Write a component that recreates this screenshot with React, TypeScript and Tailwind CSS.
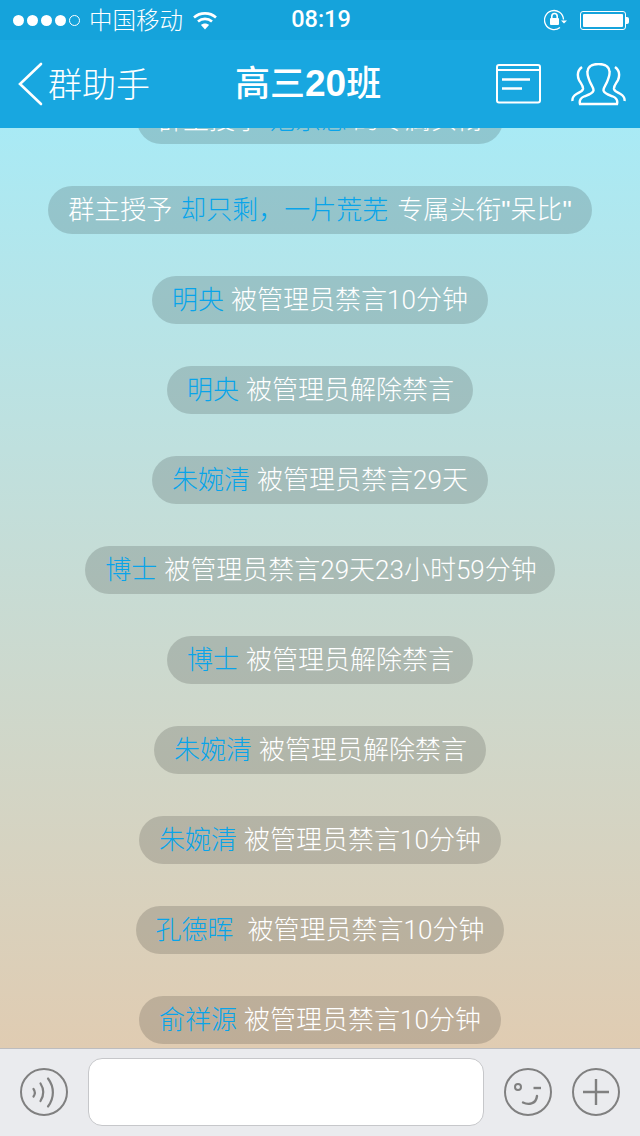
import React from 'react';

const rows = [
  { pre: '群主授予', name: '范京恋', text: '的专属头衔', gap: 'mr-[6px]', box: 'pr-[20px]' },
  { pre: '群主授予', name: '却只剩，一片荒芜', text: '专属头衔"呆比"', gap: 'mr-[9px]', box: 'pr-[20px]', quote: true },
  { name: '明央', text: '被管理员禁言10分钟', gap: 'mr-[7px]', box: 'pr-[20px]' },
  { name: '明央', text: '被管理员解除禁言', gap: 'mr-[7px]', box: 'pr-[19px]' },
  { name: '朱婉清', text: '被管理员禁言29天', gap: 'mr-[7px]', box: 'pr-[20px]' },
  { name: '博士', text: '被管理员禁言29天23小时59分钟', gap: 'mr-[7px]', box: 'pr-[18px]' },
  { name: '博士', text: '被管理员解除禁言', gap: 'mr-[7px]', box: 'pr-[19px]' },
  { name: '朱婉清', text: '被管理员解除禁言', gap: 'mr-[7px]', box: 'pr-[19px]' },
  { name: '朱婉清', text: '被管理员禁言10分钟', gap: 'mr-[7px]', box: 'pr-[20px]' },
  { name: '孔德晖', text: '被管理员禁言10分钟', gap: 'mr-[14px]', box: 'pr-[20px]' },
  { name: '俞祥源', text: '被管理员禁言10分钟', gap: 'mr-[7px]', box: 'pr-[20px]' },
];

const App = () => {
  return (
    <div className="flex h-[1136px] w-[640px] flex-col overflow-hidden bg-[#eaebee] font-['Liberation_Sans','Noto_Sans_CJK_SC',sans-serif]">
      <header className="relative z-10 h-[128px] shrink-0 bg-[#18a7e0] text-white">
        <div className="flex h-[40px] items-center justify-between bg-[#15a3db] pl-[13px] pr-[11px]">
          <div className="flex w-[220px] items-center">
            <div className="flex items-center gap-[3px]">
              <span className="h-[11px] w-[11px] rounded-full bg-white"></span>
              <span className="h-[11px] w-[11px] rounded-full bg-white"></span>
              <span className="h-[11px] w-[11px] rounded-full bg-white"></span>
              <span className="h-[11px] w-[11px] rounded-full bg-white"></span>
              <span className="h-[11px] w-[11px] rounded-full border border-white"></span>
            </div>
            <span className="ml-[9px] mt-[3px] text-[23.5px] font-light leading-none">中国移动</span>
            <svg className="ml-[10px]" width="24" height="19" viewBox="0 0 24 19" fill="none" stroke="#fff" strokeWidth="2.6">
              <path d="M1 6.500C7 1 17 1 23 6.500" />
              <path d="M5 10.500C9 7 15 7 19 10.500" />
              <path d="M12 18.500l-4-4.500c2-2 6-2 8 0z" fill="#fff" stroke="none" />
            </svg>
          </div>
          <span className="font-['Roboto','Liberation_Sans',sans-serif] text-[23.5px] font-medium leading-none">08:19</span>
          <div className="flex w-[220px] items-center justify-end">
            <svg width="24" height="22" viewBox="0 0 24 22" fill="none" stroke="#fff" strokeWidth="1.3">
              <path d="M19.500 10.500A9.500 9.500 0 1 0 16 18.400" />
              <rect x="6" y="9" width="9" height="7" rx="1" fill="#fff" stroke="none" />
              <path d="M7.800 9V7.200a2.700 2.700 0 0 1 5.400 0V9" strokeWidth="1.600" />
              <path d="M17 11.500h6l-3 3z" fill="#fff" stroke="none" />
            </svg>
            <div className="ml-[12px] flex items-center">
              <div className="h-[19px] w-[46px] rounded-[3px] border border-white p-[2px]">
                <div className="h-full w-full rounded-[1px] bg-white"></div>
              </div>
              <span className="h-[7px] w-[3px] rounded-r-[2px] bg-white"></span>
            </div>
          </div>
        </div>
        <div className="flex h-[88px] items-center pl-[18px] pr-[14px]">
          <svg width="25" height="44" viewBox="0 0 25 44" fill="none" stroke="#fff" strokeWidth="2.600" strokeLinecap="round">
            <path d="M23 2L2 22l21 20" />
          </svg>
          <span className="ml-[5px] mt-[2px] w-[102px] text-[34px] font-light leading-none">群助手</span>
          <div className="ml-[85px] text-[35px] font-medium leading-[44px]">
            高三<span className="text-[37px] font-bold">20</span>班
          </div>
          <div className="ml-auto flex items-center">
            <svg width="46" height="40" viewBox="0 0 46 40" fill="none" stroke="#fff" strokeWidth="2">
              <rect x="1" y="1" width="43" height="37.500" rx="2" />
              <path d="M1 6h43" />
              <path d="M6 15.500h28M6 24.500h20" strokeWidth="2.500" />
            </svg>
            <svg className="ml-[29px]" width="55" height="43" viewBox="0 0 55 43" fill="none" stroke="#fff" strokeWidth="2.400">
              <path d="M9 41c-1-4 .5-6 4-7.500 4-1.500 9-3 9.500-6 .4-2.500-2-5-3.500-8.500-1.500-3.500-3-7-2.500-10.500C17 3 21 1 27.500 1S38 3 38.500 8.500c.5 3.500-1 7-2.500 10.500s-3.900 6-3.500 8.500c.5 3 5.500 4.500 9.500 6 3.500 1.500 5 3.500 4 7.500z" />
              <path d="M11 4C7 7 6 12 8 17c1.500 3 4.500 6 4 9-.5 2.500-4 3.500-6.500 5C3 32.500 1 34.500 1.500 38" />
              <path d="M44 4C48 7 49 12 47 17c-1.500 3-4.500 6-4 9 .5 2.500 4 3.500 6.500 5 2.500 1.500 4.500 3.500 4 7" />
            </svg>
          </div>
        </div>
      </header>
      <main className="min-h-0 flex-1 overflow-hidden bg-gradient-to-b from-[#a9eaf5] to-[#e0ccb2]">
        <div className="-mt-[32px] flex flex-col items-center gap-[42px] font-['Roboto','Noto_Sans_CJK_SC',sans-serif] text-[26px] font-light">
          {rows.map((row, i) => {
            return (
              <div className={`flex h-[48px] items-center whitespace-nowrap rounded-[24px] bg-black/[0.15] pl-[20px] text-white ${row.box}`} key={i}>
                {row.pre && <span className="mr-[8px]">{row.pre}</span>}
                <span className={`${row.gap} text-[#08a4ea]`}>{row.name}</span>
                <span className={row.quote ? "font-['Liberation_Sans','Noto_Sans_CJK_SC',sans-serif]" : ''}>{row.text}</span>
              </div>
            );
          })}
        </div>
      </main>
      <footer className="flex h-[88px] shrink-0 items-center border-t border-[#bdbdbf] bg-[#eaebee] px-[20px] pb-[2px]">
        <svg width="48" height="48" viewBox="0 0 48 48" fill="none" stroke="#808080" strokeWidth="2">
          <circle cx="24" cy="24" r="23" />
          <path d="M13.500 21c1.800 2.500 1.800 5 0 7.500M20.500 15.500c3.500 5.500 3.500 12 0 17.500M28 10.500c6.500 8.500 6.500 19.500 0 28" strokeLinecap="round" strokeWidth="2.200" />
        </svg>
        <div className="ml-[20px] h-[68px] w-[396px] rounded-[14px] border border-[#c6c7ca] bg-white"></div>
        <svg className="ml-[20px]" width="48" height="48" viewBox="0 0 48 48" fill="none" stroke="#808080" strokeWidth="2">
          <circle cx="24" cy="24" r="23" />
          <circle cx="14" cy="19" r="3" />
          <path d="M29.500 20h7.500" strokeWidth="2.400" />
          <path d="M19 34.500c5 2.500 13 2 14-6.500" strokeLinecap="round" strokeWidth="2.400" />
        </svg>
        <svg className="ml-[20px]" width="48" height="48" viewBox="0 0 48 48" fill="none" stroke="#808080" strokeWidth="2">
          <circle cx="24" cy="24" r="23" />
          <path d="M24 11v26M11 24h26" strokeWidth="2.400" />
        </svg>
      </footer>
    </div>
  );
};

export default App;
